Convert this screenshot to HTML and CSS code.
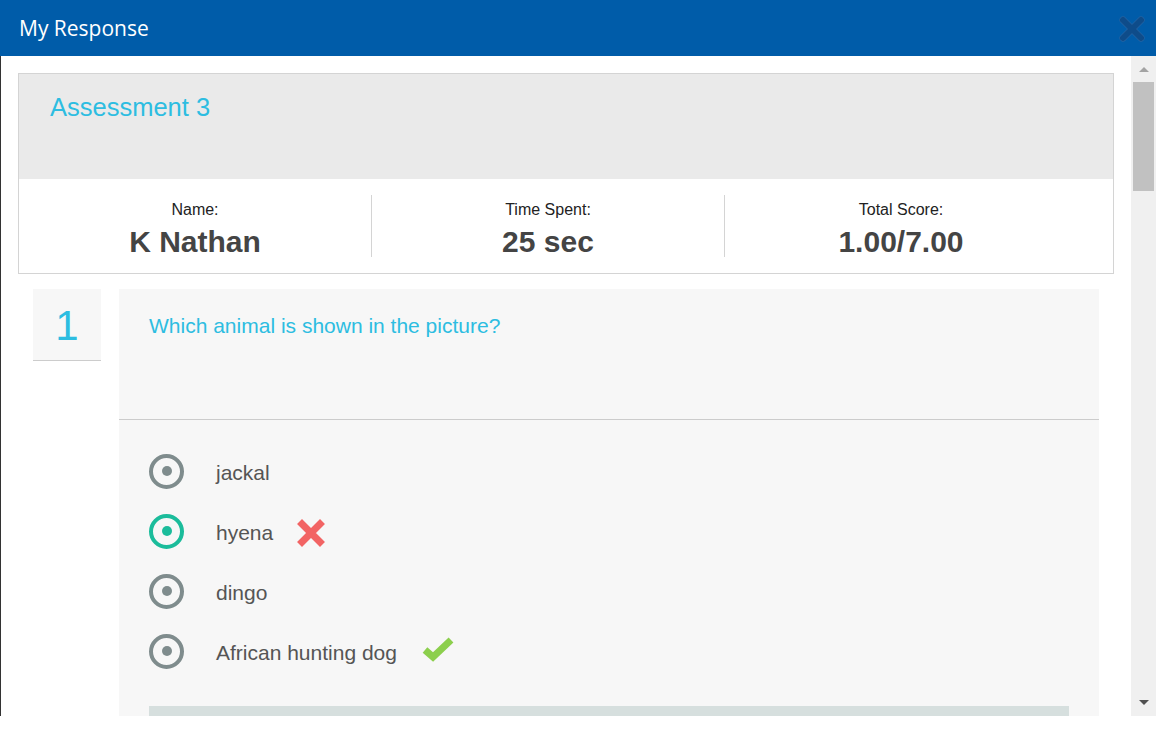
FILE: index.html
```html
<!DOCTYPE html>
<html>
<head>
  <meta charset="utf-8">
  <link rel="stylesheet" href="styles.css">
</head>
<body>
  <div class="dialog">
    <div class="dialog-header">
      <h1>My Response</h1>
      <span class="close">
        <svg width="30" height="30" viewBox="0 0 30 30">
          <path d="M6 6 L24 24 M24 6 L6 24" stroke="#2a66a3" stroke-width="7" stroke-linecap="round"/>
          <path d="M6 6 L24 24 M24 6 L6 24" stroke="#0e4c8a" stroke-width="6" stroke-linecap="round"/>
        </svg>
      </span>
    </div>

    <div class="dialog-body">
      <div class="content">
        <!-- summary card -->
        <div class="summary">
          <div class="summary-top">
            <h2>Assessment 3</h2>
          </div>
          <div class="summary-stats">
            <div class="stat">
              <div class="stat-label">Name:</div>
              <div class="stat-value">K Nathan</div>
            </div>
            <div class="stat">
              <div class="stat-label">Time Spent:</div>
              <div class="stat-value">25 sec</div>
            </div>
            <div class="stat">
              <div class="stat-label">Total Score:</div>
              <div class="stat-value">1.00/7.00</div>
            </div>
          </div>
        </div>

        <!-- question -->
        <div class="question">
          <div class="q-number">1</div>
          <div class="q-panel">
            <div class="q-title">Which animal is shown in the picture?</div>
            <div class="q-options">
              <div class="option">
                <span class="radio"></span>
                <span class="option-text">jackal</span>
              </div>
              <div class="option">
                <span class="radio radio-selected"></span>
                <span class="option-text">hyena</span>
                <svg class="mark" width="28" height="28" viewBox="0 0 28 28">
                  <path d="M5 5 L23 23 M23 5 L5 23" stroke="#f26464" stroke-width="7" stroke-linecap="square"/>
                </svg>
              </div>
              <div class="option">
                <span class="radio"></span>
                <span class="option-text">dingo</span>
              </div>
              <div class="option">
                <span class="radio"></span>
                <span class="option-text">African hunting dog</span>
                <svg class="mark mark-check" width="32" height="26" viewBox="0 0 32 26">
                  <path d="M3 13 L11 20 L29 3" stroke="#8ccf4d" stroke-width="7" fill="none" stroke-linejoin="miter"/>
                </svg>
              </div>
            </div>
            <div class="q-footer"></div>
          </div>
        </div>
      </div>

      <div class="scrollbar">
        <span class="arrow arrow-up"></span>
        <div class="track">
          <div class="thumb"></div>
        </div>
        <span class="arrow arrow-down"></span>
      </div>
    </div>
  </div>
</body>
</html>
```

FILE: styles.css
```css
body {
  margin: 0;
  padding: 0;
  width: 1156px;
  height: 730px;
  overflow: hidden;
  background: #fff;
  font-family: "Liberation Sans", Arial, sans-serif;
}

.dialog {
  width: 1156px;
}

.dialog-header {
  height: 56px;
  background: #005ca9;
  display: flex;
  align-items: center;
  justify-content: space-between;
  padding: 0 9px 0 19px;
}

.dialog-header h1 {
  margin: 0;
  font-family: "Open Sans", sans-serif;
  font-size: 21px;
  font-weight: 400;
  color: #fff;
}

.close {
  display: flex;
  margin-top: 1px;
}

.dialog-body {
  display: flex;
  height: 660px;
  border-left: 1px solid #333;
}

.content {
  flex: 1;
  overflow: hidden;
  padding: 17px 17px 0 17px;
  background: #fff;
}

/* summary card */
.summary {
  border: 1px solid #d4d4d4;
}

.summary-top {
  height: 105px;
  background: #eaeaea;
  padding: 0 31px;
  box-sizing: border-box;
}

.summary-top h2 {
  margin: 0;
  padding-top: 19px;
  font-size: 25.5px;
  font-weight: 400;
  color: #2dbde1;
}

.summary-stats {
  display: flex;
  height: 94px;
  align-items: center;
}

.stat {
  width: 353px;
  flex: none;
  text-align: center;
  height: 62px;
  border-left: 1px solid #d4d4d4;
  box-sizing: border-box;
}

.stat:first-child {
  width: 352px;
  border-left: none;
}

.stat-label {
  font-size: 16px;
  color: #222;
  margin-top: 6px;
}

.stat-value {
  font-size: 30px;
  font-weight: 700;
  color: #444;
  margin-top: 6px;
}

/* question */
.question {
  display: flex;
  gap: 18px;
  margin: 15px 15px 0 15px;
}

.q-number {
  width: 68px;
  height: 71px;
  background: #f7f7f7;
  border-bottom: 1px solid #ccc;
  text-align: center;
  font-size: 42px;
  line-height: 73px;
  color: #2dbde1;
}

.q-panel {
  flex: 1;
  background: #f7f7f7;
  height: 430px;
}

.q-title {
  height: 131px;
  box-sizing: border-box;
  padding: 25px 30px 0 30px;
  font-size: 21px;
  color: #2dbde1;
  border-bottom: 1px solid #ccc;
}

.q-options {
  padding: 21px 30px 0 30px;
}

.option {
  display: flex;
  align-items: center;
  height: 60px;
}

.radio {
  width: 27px;
  height: 27px;
  border: 4px solid #7f8c8d;
  border-radius: 50%;
  display: flex;
  align-items: center;
  justify-content: center;
  flex: none;
}

.radio::after {
  content: "";
  width: 10px;
  height: 10px;
  border-radius: 50%;
  background: #7f8c8d;
}

.radio-selected {
  border-color: #1bbc9b;
}

.radio-selected::after {
  background: #1bbc9b;
}

.option-text {
  margin-left: 32px;
  margin-top: 3px;
  font-size: 21px;
  color: #555;
}

.mark {
  margin-left: 24px;
  margin-top: 3px;
}

.mark-check {
  margin-left: 25px;
  margin-top: -2px;
}

.q-footer {
  margin: 25px 30px 0 30px;
  height: 12px;
  background: #d6dfde;
}

/* scrollbar */
.scrollbar {
  width: 25px;
  background: #f0f0f0;
  display: flex;
  flex-direction: column;
  align-items: center;
}

.arrow {
  width: 0;
  height: 0;
  border-left: 5px solid transparent;
  border-right: 5px solid transparent;
}

.arrow-up {
  border-bottom: 5px solid #a3a3a3;
  margin: 11px 0 10px;
}

.arrow-down {
  border-top: 5px solid #505050;
  margin: 9px 0 11px;
}

.track {
  flex: 1;
  width: 21px;
}

.thumb {
  height: 109px;
  background: #c1c1c1;
}
```
